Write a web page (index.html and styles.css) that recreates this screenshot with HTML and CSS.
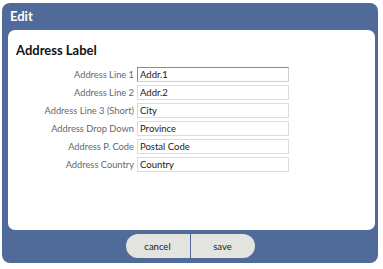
FILE: index.html
```html
<!DOCTYPE html>
<html lang="en">
<head>
    <meta charset="UTF-8">
    <meta name="viewport" content="width=device-width, initial-scale=1.0">
    <title>Edit</title>
    <link rel="stylesheet" href="styles.css">
</head>
<body>
    <div class="dialog">
        <div class="dialog-title">Edit</div>

        <div class="panel">
            <h2>Address Label</h2>
            <form class="address-form">
                <label for="line1">Address Line 1</label>
                <input type="text" id="line1" class="focused" value="Addr.1">

                <label for="line2">Address Line 2</label>
                <input type="text" id="line2" value="Addr.2">

                <label for="line3">Address Line 3 (Short)</label>
                <input type="text" id="line3" value="City">

                <label for="dropdown">Address Drop Down</label>
                <input type="text" id="dropdown" value="Province">

                <label for="pcode">Address P. Code</label>
                <input type="text" id="pcode" value="Postal Code">

                <label for="country">Address Country</label>
                <input type="text" id="country" value="Country">
            </form>
        </div>

        <div class="dialog-buttons">
            <button type="button" class="btn-cancel">cancel</button>
            <button type="button" class="btn-save">save</button>
        </div>
    </div>
</body>
</html>
```

FILE: styles.css
```css
body {
    font-family: Lato, 'Open Sans', sans-serif;
    margin: 0;
    padding: 3px 0 0 2px;
    background-color: #fff;
}

.dialog {
    width: 376px;
    height: 260px;
    background-color: #506b99;
    border-radius: 8px;
    box-sizing: border-box;
    padding: 0 3px 0 6px;
}

.dialog-title {
    height: 27px;
    line-height: 27px;
    color: #fff;
    font-size: 13px;
    font-weight: 700;
    padding-left: 2px;
}

.panel {
    height: 200px;
    background: #fff;
    border-radius: 7px;
    padding: 12px 8px 0 8px;
    box-sizing: border-box;
}

.panel h2 {
    margin: 0 0 8px 0;
    font-size: 13px;
    line-height: 17px;
    font-weight: 700;
    color: #111;
}

.address-form {
    display: grid;
    grid-template-columns: 118px 152px;
    column-gap: 3px;
    row-gap: 3px;
    align-items: center;
}

label {
    text-align: right;
    font-size: 9.3px;
    color: #686868;
    white-space: nowrap;
}

input {
    height: 15px;
    box-sizing: border-box;
    margin: 0;
    padding: 0 2px;
    border: 1px solid #dcdcdc;
    font-family: Lato, sans-serif;
    font-size: 9.5px;
    color: #1a1a1a;
    background: #fff;
    outline: none;
}

input.focused {
    border-color: #8c8c8c #d0d0d0 #d0d0d0 #8c8c8c;
}

.dialog-buttons {
    display: flex;
    justify-content: center;
    padding: 4px 0 0 0;
    margin-left: -3px;
}

button {
    width: 64px;
    height: 24px;
    background-color: #e3e3df;
    color: #222;
    border: none;
    font-family: Lato, sans-serif;
    font-size: 9.5px;
    padding: 0;
    cursor: pointer;
}

.btn-cancel {
    border-radius: 12px 0 0 12px;
    margin-right: 1px;
}

.btn-save {
    border-radius: 0 12px 12px 0;
}
```
